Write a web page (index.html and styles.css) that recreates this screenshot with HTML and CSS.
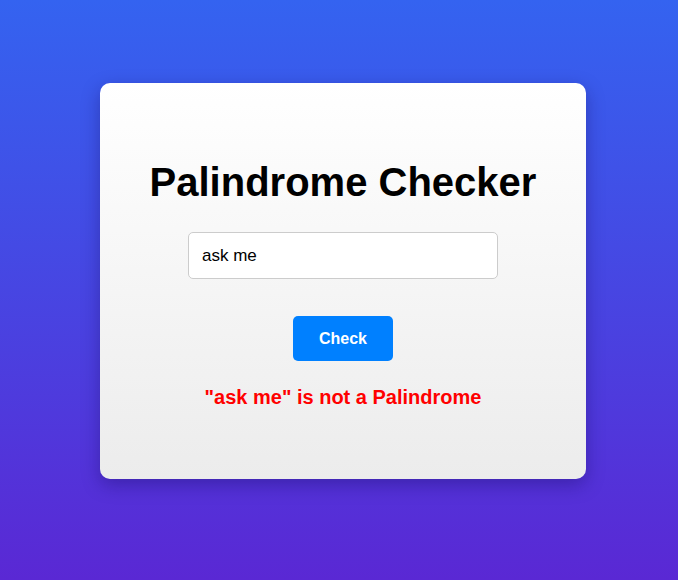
FILE: index.html
```html
<!DOCTYPE html>
<html lang="en">
<head>
<meta charset="utf-8">
<title>Palindrome Checker</title>
<link rel="stylesheet" href="styles.css">
</head>
<body>
  <main class="card">
    <h1 class="title">Palindrome Checker</h1>
    <input class="field" type="text" value="ask me">
    <button class="btn" type="button">Check</button>
    <p class="result">"ask me" is not a Palindrome</p>
  </main>
</body>
</html>
```
FILE: styles.css
```css
html, body {
  margin: 0;
  height: 100%;
}
body {
  box-sizing: border-box;
  background: linear-gradient(180deg, #3463f0 0%, #5a28d4 100%);
  font-family: "Liberation Sans", Arial, sans-serif;
  display: flex;
  justify-content: center;
  align-items: flex-start;
  padding: 83px 0 0 8px;
}
.card {
  box-sizing: border-box;
  width: 486px;
  height: 396px;
  border-radius: 10px;
  background: linear-gradient(180deg, #ffffff 0%, #ececec 100%);
  box-shadow: 0 6px 18px rgba(20, 10, 90, 0.35);
  padding: 76px 0 0;
  display: flex;
  flex-direction: column;
  align-items: center;
}
.title {
  margin: 0;
  font-size: 40px;
  line-height: 46px;
  font-weight: bold;
  color: #000;
}
.field {
  box-sizing: border-box;
  margin-top: 27px;
  width: 310px;
  height: 47px;
  border: 1px solid #cccccc;
  border-radius: 5px;
  background: #fff;
  padding: 0 13px;
  font-family: "Liberation Sans", Arial, sans-serif;
  font-size: 17px;
  color: #000;
  outline: none;
}
.btn {
  margin-top: 37px;
  width: 100px;
  height: 45px;
  border: none;
  border-radius: 5px;
  background: #0080ff;
  color: #fff;
  font-family: "Liberation Sans", Arial, sans-serif;
  font-size: 16px;
  font-weight: bold;
  cursor: pointer;
}
.result {
  margin: 25px 0 0;
  font-size: 20px;
  line-height: 23px;
  font-weight: bold;
  color: #ff0000;
}
```
